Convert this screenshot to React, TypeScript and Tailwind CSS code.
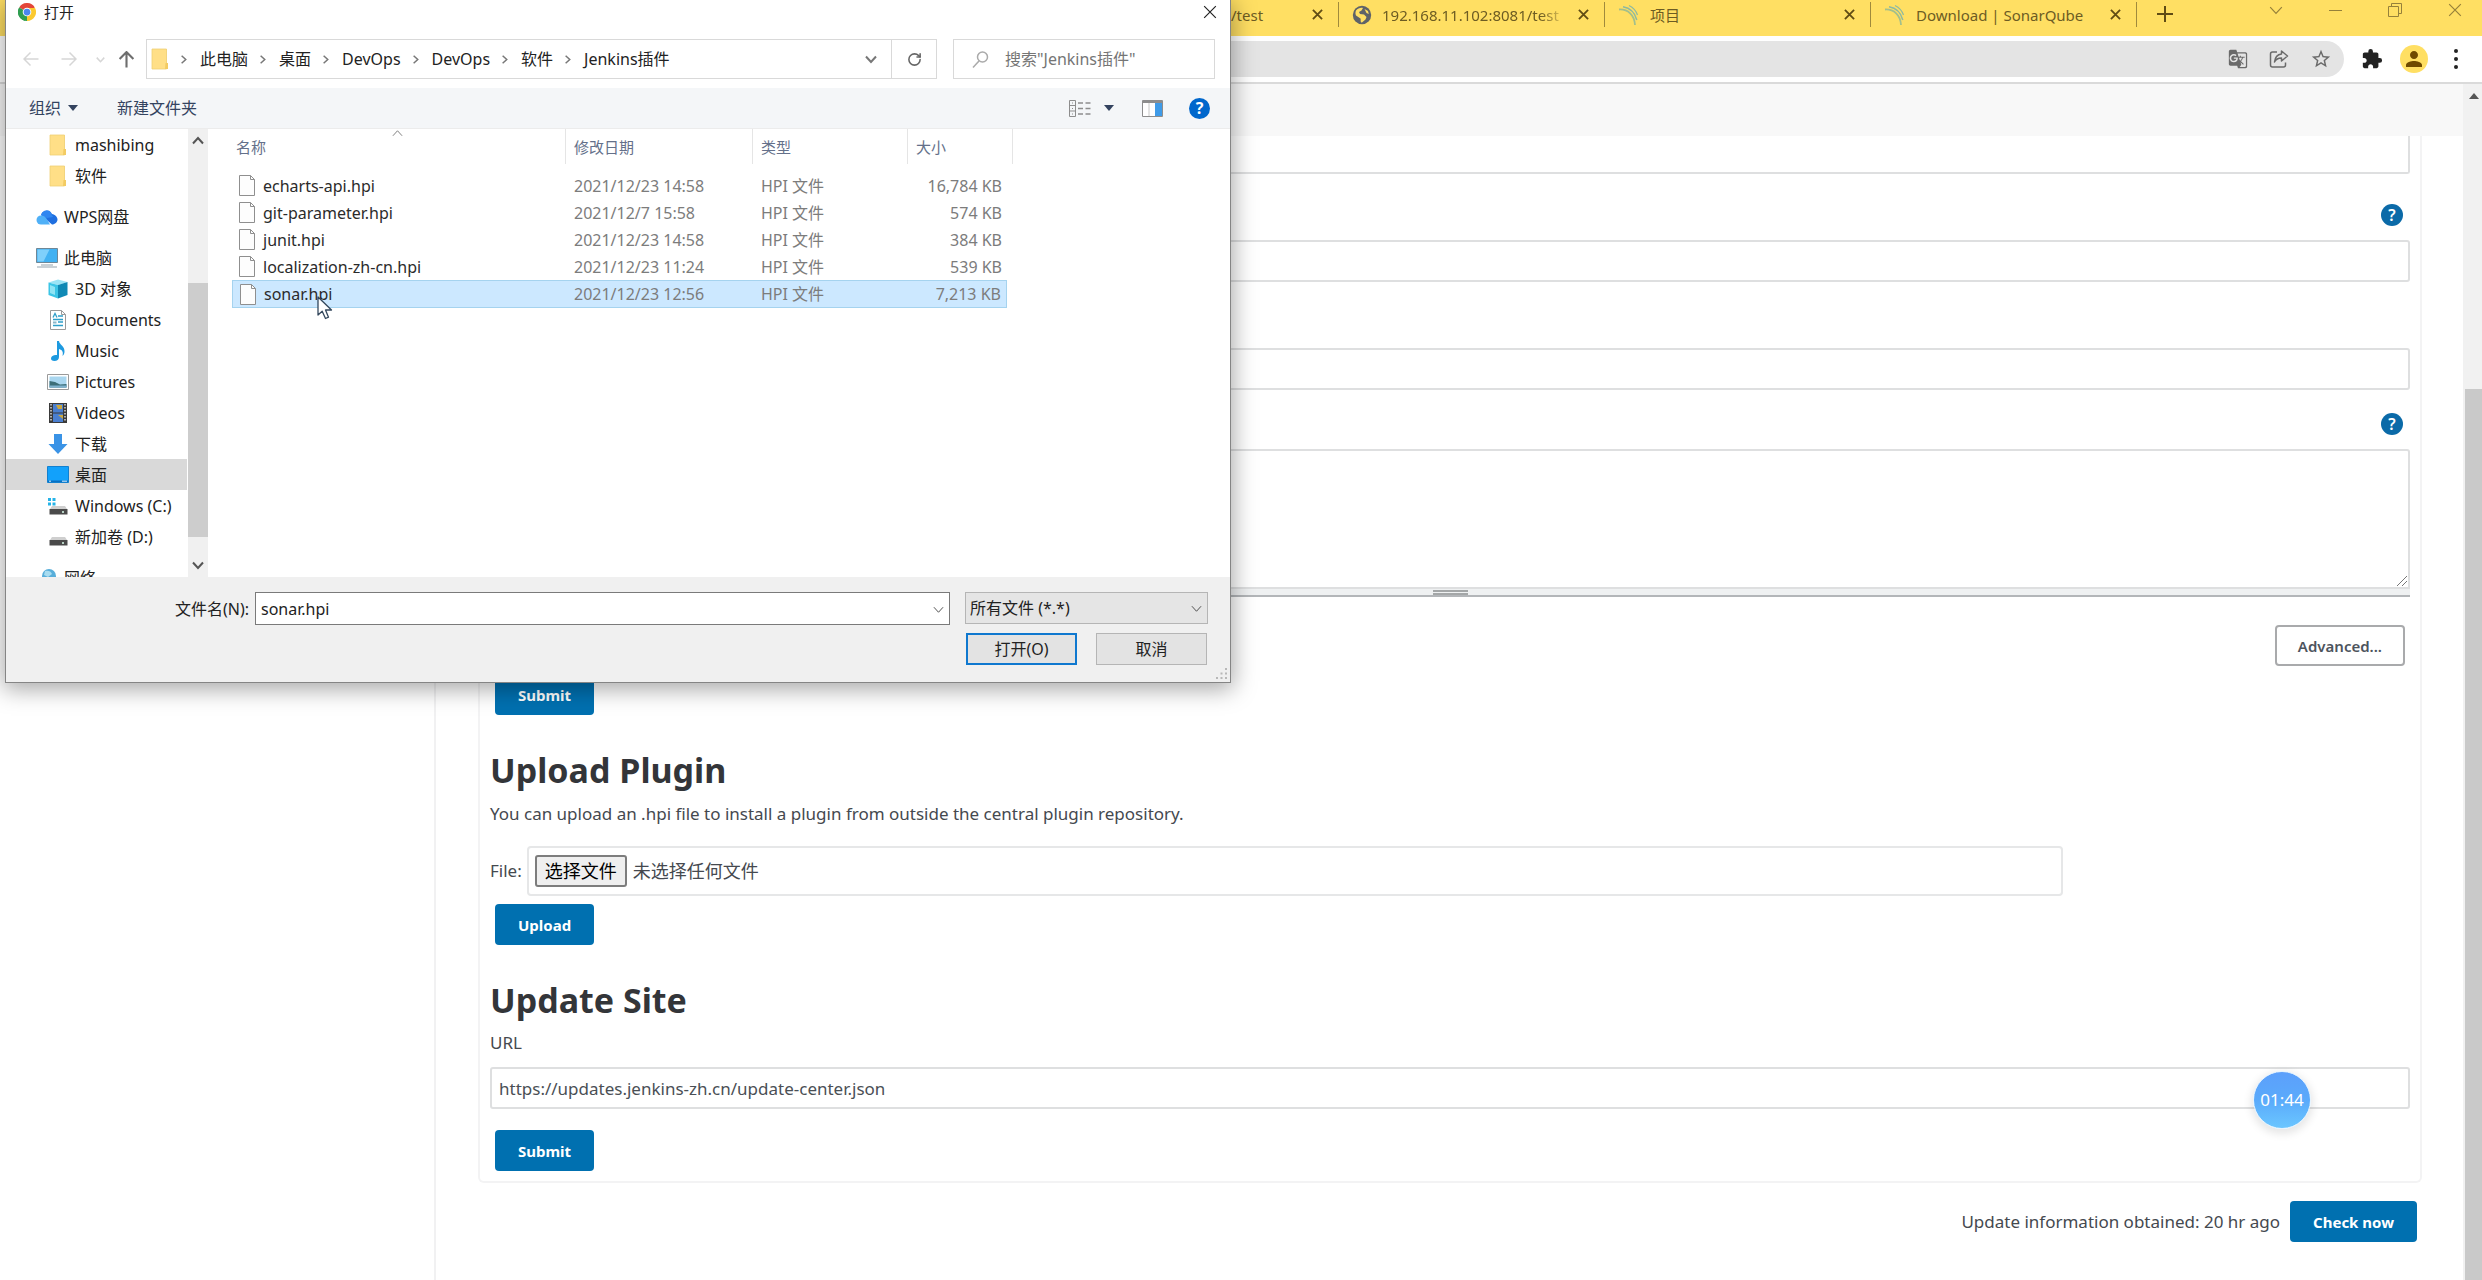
import type { ReactNode } from "react";
import { RotateCw } from "lucide-react";
import { MdExtension, MdGTranslate, MdPerson, MdStarBorder } from "react-icons/md";

/* ---------- small glyphs ---------- */

type GlyphProps = { className?: string };

const Chevron = ({ className = "" }: GlyphProps) => (
  <svg viewBox="0 0 12 12" fill="none" stroke="currentColor" className={className} aria-hidden="true">
    <path d="M1 3.5 6 9l5-5.5" />
  </svg>
);

const Cross = ({ className = "" }: GlyphProps) => (
  <svg viewBox="0 0 12 12" fill="none" stroke="currentColor" className={className} aria-hidden="true">
    <path d="M1 1l10 10M11 1 1 11" />
  </svg>
);

const Triangle = ({ className = "" }: GlyphProps) => (
  <svg viewBox="0 0 10 6" fill="currentColor" className={className} aria-hidden="true">
    <path d="M0 0h10L5 6z" />
  </svg>
);

const Arrow = ({ className = "" }: GlyphProps) => (
  <svg viewBox="0 0 16 16" fill="none" stroke="currentColor" className={className} aria-hidden="true">
    <path d="M15.5 8H1M7.5 1.5 1 8l6.500 6.500" />
  </svg>
);

const ChromeLogo = () => (
  <svg viewBox="0 0 48 48" className="size-[18px] shrink-0" aria-hidden="true">
    <path d="M24 24 3.200 12A24 24 0 0 1 44.800 12z" fill="#e3463a" />
    <path d="M24 24 44.800 12A24 24 0 0 1 24 48z" fill="#fbc92f" />
    <path d="M24 24v24A24 24 0 0 1 3.200 12z" fill="#2f9e50" />
    <path d="M24 13h20.300L44.800 12H24zM24 12h20.800a24 24 0 0 1 .5 1.500L33.500 29.500z" fill="#fbc92f" />
    <path d="M3.200 12 14.500 29.500 24 35l-6 12.200A24 24 0 0 1 3.200 12z" fill="#2f9e50" />
    <circle cx="24" cy="24" r="11.500" fill="#fff" />
    <circle cx="24" cy="24" r="9" fill="#4b86ee" />
  </svg>
);

const SonarIcon = () => (
  <svg viewBox="0 0 22 22" fill="none" className="size-[22px] shrink-0" aria-hidden="true">
    <path d="M1 5.500C10 5 16.500 11 17 21" stroke="#a3bf8c" strokeWidth="1.800" />
    <path d="M5 2.800C12 4 17 9 18.800 16" stroke="#8fb9a0" strokeWidth="1.500" />
    <path d="M11 1.500c4 2 7 5 8.500 9.500" stroke="#8fb9a0" strokeWidth="1.200" />
  </svg>
);

const GlobeIcon = () => (
  <svg viewBox="0 0 20 20" className="size-[20px] shrink-0" aria-hidden="true">
    <circle cx="10" cy="10" r="9.200" fill="#5f6368" />
    <path
      d="M4 5.500C6 3 9 2.300 11 3l-1.500 2.500L7 7l1 2 4 .5 2.500 2.500-1 2.500L10 17.500C8 17.500 9 15 8.500 13.500L4 10.500C3.300 9 3.300 7 4 5.500zM12.500 4l3.500 2 .8 3-2.300-1z"
      fill="#ffdf63"
    />
  </svg>
);

const ShareIcon = () => (
  <svg viewBox="0 0 20 20" fill="none" stroke="#6a6a6a" strokeWidth="1.500" strokeLinejoin="round" className="size-[20px]" aria-hidden="true">
    <path d="M8 3H3.500C2.500 3 1.500 4 1.500 5v11c0 1 1 2 2 2h11c1 0 2-1 2-2v-2.500" />
    <path d="M12.500 2 18.500 7l-6 5V9C9 9 7 10 5.500 13 6 8.500 8 5.500 12.500 5z" />
  </svg>
);

/* ---------- explorer tree and file icons ---------- */

const FolderIcon = () => (
  <svg viewBox="0 0 18 22" className="h-[22px] w-[18px] shrink-0" aria-hidden="true">
    <path d="M1 1h14.500v14l1.500 1v5H1z" fill="#ffe08a" />
    <path d="M1 1h14.500v20H1z" fill="#ffdf87" stroke="#efcf74" strokeWidth=".8" />
    <path d="M14.500 15h2.500v6h-3z" fill="#f3cb62" />
  </svg>
);

const CloudIcon = () => (
  <svg viewBox="0 0 22 16" className="h-4 w-[22px]" aria-hidden="true">
    <path d="M5 6a6 6 0 0 1 11-1c3 .5 5.500 3 5.500 5.500S19 15.500 16 15.500L6 7z" fill="#1f6fe0" />
    <path d="M5 6a6 6 0 0 1 9-3.800L17 8l-6 1z" fill="#2f86f0" />
    <path d="M5 15.500a4.500 4.500 0 0 1 0-9c3 0 4.500 1.500 6 4l3 5z" fill="#4fb0f7" />
  </svg>
);

const ComputerIcon = () => (
  <svg viewBox="0 0 22 20" className="h-5 w-[22px]" aria-hidden="true">
    <path d="M.5.500h21v14H.5z" fill="#41b1f2" stroke="#6e8797" />
    <path d="M1.500 1.500h12l-6 12h-6z" fill="#7fd0fb" />
    <path d="M5 17h12M1 19h20" stroke="#93a3ad" />
  </svg>
);

const CubeIcon = () => (
  <svg viewBox="0 0 20 20" className="size-5" aria-hidden="true">
    <path d="M10 .5 19.500 3 10 6 .5 3.500z" fill="#9be4f5" />
    <path d="M.5 3.500 10 6v13.500L.5 16z" fill="#3cc5e6" />
    <path d="M19.500 3v13L10 19.500V6z" fill="#1089b5" />
    <path d="M2 6v8l5 2V8z" fill="#8fe4f4" />
  </svg>
);

const DocumentIcon = () => (
  <svg viewBox="0 0 16 20" className="h-5 w-4" aria-hidden="true">
    <path d="M.5.500h11l4 4v15H.5z" fill="#fff" stroke="#9a9a9a" />
    <path d="M11.500.5v4h4" fill="none" stroke="#9a9a9a" />
    <path d="M3 7.500 5 3.500l2 4M8 6h5M3 9.500h10M8 12h5M3 15.500h10" stroke="#2f9fc9" strokeWidth="1.300" fill="none" />
    <path d="M3 11.500h3.500v2H3z" fill="#8bb7c9" />
  </svg>
);

const MusicIcon = () => (
  <svg viewBox="0 0 16 22" className="h-[22px] w-4" aria-hidden="true">
    <path d="M7 1h2c.5 4 6 5 5.500 11-.2 2-1 3-2 4 1-4 0-6-3.500-7v8c0 2.500-2 4-4.500 4S1 20 1 18.500C1 16 4 14.500 7 15z" fill="#1d9ae0" />
  </svg>
);

const PictureIcon = () => (
  <svg viewBox="0 0 22 16" className="h-4 w-[22px]" aria-hidden="true">
    <path d="M.5.500h21v15H.5z" fill="#fff" stroke="#9a9a9a" />
    <path d="M2.500 2.500h17v11h-17z" fill="#a9d6ef" />
    <path d="M2.500 7 8 8l5 2.500 6.500-.5v3.500h-17z" fill="#3c6e78" />
    <path d="M2.500 11.500h17v2h-17z" fill="#7fb3cf" />
  </svg>
);

const VideoIcon = () => (
  <svg viewBox="0 0 18 20" className="h-5 w-[18px]" aria-hidden="true">
    <path d="M0 0h18v20H0z" fill="#3a3a3a" />
    <path d="M4 1h10v8.500H4zM4 10.500h10V19H4z" fill="#4a7fd0" />
    <path d="M7 2h6v4H9zM9 12h5v4z" fill="#c9a740" />
    <path d="M2 1v18M16 1v18" stroke="#d8d8d8" strokeWidth="1.500" strokeDasharray="1.500 1.500" />
  </svg>
);

const DownloadIcon = () => (
  <svg viewBox="0 0 20 20" className="size-5" aria-hidden="true">
    <path d="M6 0h8v10h5.500L10 20 .5 10H6z" fill="#3a93e6" />
  </svg>
);

const DesktopIcon = () => (
  <svg viewBox="0 0 22 17" className="h-[17px] w-[22px]" aria-hidden="true">
    <path d="M.5.500h21v16H.5z" fill="#12a1fb" stroke="#1280cf" />
    <path d="M1 14.500h20V16H1z" fill="#0a6fc0" />
    <path d="M2 15.200h2M15 15.200h5" stroke="#d7efff" />
  </svg>
);

const DriveIcon = ({ system = false }: { system?: boolean }) => (
  <svg viewBox="0 0 22 18" className="h-[18px] w-[22px]" aria-hidden="true">
    {system && <path d="M1 1h3v3H1zM5.500 1h3v3h-3zM1 5.500h3v3H1zM5.500 5.500h3v3h-3z" fill="#25b3e8" />}
    <path d="M5 9h13l2 3H3z" fill="#cfcfcf" />
    <path d="M2.500 12h18v5.500h-18z" fill="#4a4a4a" />
    <path d="M15 15h2" stroke="#dfe" strokeWidth="1.500" />
  </svg>
);

const NetworkIcon = () => (
  <svg viewBox="0 0 20 20" className="size-5" aria-hidden="true">
    <circle cx="12" cy="8" r="7" fill="#58aeda" />
    <path d="M8 3c3-1 6 0 7 3l-4 3-4-2z" fill="#a8dcf0" />
    <path d="M1 9h9v8H1z" fill="#5d97bd" />
  </svg>
);

const FileIcon = () => (
  <svg viewBox="0 0 16 21" className="h-[21px] w-4 shrink-0" aria-hidden="true">
    <path d="M.5.500h11l4 4v16H.5z" fill="#fdfdfd" stroke="#8f8f8f" />
    <path d="M11.500.5v4h4" fill="none" stroke="#8f8f8f" />
  </svg>
);

const MousePointer = () => (
  <svg viewBox="0 0 16 24" className="absolute top-3 left-[84px] z-10 h-6 w-4" aria-hidden="true">
    <path d="M1 1v18l4.200-3.800L8.500 22.500l3-1.300L8.500 14h6z" fill="#fff" stroke="#33475c" strokeWidth="1.300" strokeLinejoin="round" />
  </svg>
);

/* ---------- browser chrome ---------- */

function Tab({ icon, title, wide = true, fade = false }: { icon?: ReactNode; title: string; wide?: boolean; fade?: boolean }) {
  return (
    <div
      className={
        "flex h-[25px] shrink-0 items-center border-r border-[#a08a3c] pr-[15px] " +
        (wide ? "w-[266px] gap-[10px] pl-[13px]" : "w-[110px] pl-[2px]")
      }
    >
      {icon}
      <span
        className={
          "min-w-0 flex-1 overflow-hidden text-[15px] leading-5 whitespace-nowrap text-[#6d5c23] " +
          (fade ? "[mask-image:linear-gradient(to_right,#000_85%,transparent)]" : "")
        }
      >
        {title}
      </span>
      <button type="button" aria-label="Close tab" className="shrink-0 text-[#604c14]">
        <Cross className="size-[11px] stroke-2" />
      </button>
    </div>
  );
}

function BrowserChrome() {
  return (
    <header className="shrink-0">
      <div className="flex h-9 bg-[#ffdf63] pt-[2px]">
        <div className="w-[1229px] shrink-0" />
        <Tab title="/test" wide={false} />
        <Tab icon={<GlobeIcon />} title="192.168.11.102:8081/test" fade />
        <Tab icon={<SonarIcon />} title="项目" />
        <Tab icon={<SonarIcon />} title="Download | SonarQube" />
        <button type="button" aria-label="New tab" className="ml-5 flex h-6 items-center text-[#604c14]">
          <svg viewBox="0 0 16 16" stroke="currentColor" strokeWidth="2" className="size-4" aria-hidden="true">
            <path d="M8 0v16M0 8h16" />
          </svg>
        </button>
        <div className="ml-auto flex h-4 items-center gap-[46px] pr-5 text-[#96813a]">
          <button type="button" aria-label="Search tabs"><Chevron className="size-[14px]" /></button>
          <button type="button" aria-label="Minimize"><div className="h-px w-[13px] bg-[#96813a]" /></button>
          <button type="button" aria-label="Restore">
            <svg viewBox="0 0 14 14" fill="none" stroke="currentColor" className="size-[14px]" aria-hidden="true">
              <path d="M.5 3.500h10v10H.5zM3.500 3.500v-3h10v10h-3" />
            </svg>
          </button>
          <button type="button" aria-label="Close window"><Cross className="size-[14px]" /></button>
        </div>
      </div>

      <div className="flex h-[48px] items-center border-b-2 border-[#dadada] bg-white pr-6 pl-[200px]">
        <div className="flex h-9 flex-1 items-center justify-end gap-[21px] rounded-full bg-[#e4e4e4] pr-3 text-[#6a6a6a]">
          <button type="button" aria-label="Translate"><MdGTranslate className="size-5" /></button>
          <button type="button" aria-label="Share"><ShareIcon /></button>
          <button type="button" aria-label="Bookmark"><MdStarBorder className="size-[22px]" /></button>
        </div>
        <button type="button" aria-label="Extensions" className="ml-[17px] text-[#222]"><MdExtension className="size-[22px]" /></button>
        <button type="button" aria-label="Profile" className="ml-[17px] flex size-7 items-center justify-center rounded-full bg-[#ffdf63] text-[#6f4a00]">
          <MdPerson className="size-6" />
        </button>
        <button type="button" aria-label="Menu" className="ml-[26px] flex flex-col gap-1">
          <span className="size-1 rounded-full bg-[#222]" />
          <span className="size-1 rounded-full bg-[#222]" />
          <span className="size-1 rounded-full bg-[#222]" />
        </button>
      </div>
    </header>
  );
}

/* ---------- plugin manager page ---------- */

const fieldBox = "block h-[42px] w-full rounded-[3px] border-2 border-[#dedfe0] bg-white px-[7px] text-[17px] leading-6 text-[#4a4f55] outline-none";

function PrimaryButton({ children, className = "" }: { children: ReactNode; className?: string }) {
  return (
    <button type="button" className={"h-[41px] rounded-[4px] bg-[#0070b0] px-[23px] text-[15px] leading-5 font-bold text-white " + className}>
      {children}
    </button>
  );
}

function HelpRow({ className }: { className: string }) {
  return (
    <div className={"flex items-end justify-end pr-[7px] " + className}>
      <button type="button" aria-label="Help" className="flex size-[22px] items-center justify-center rounded-full bg-[#0b6aa8] text-base leading-5 font-semibold text-white">
        ?
      </button>
    </div>
  );
}

function PluginPage() {
  return (
    <div className="flex min-h-0 flex-1">
      <div className="flex min-w-0 flex-1 flex-col">
        <div className="h-[52px] shrink-0 bg-[#f8f8f8]" />
        <div className="flex min-h-0 flex-1">
          <aside className="w-[436px] shrink-0 border-r-2 border-[#f1f1f2]" />
          <main className="flex-1 pr-[41px] pl-[42px] text-[17px] leading-6 text-[#45494f]">
            <section className="rounded-b-md border-x-2 border-b-2 border-[#f3f3f4] px-[10px] pb-[10px]">
              <input aria-label="Server" className="block h-[38px] w-full rounded-b-[3px] border-2 border-t-0 border-[#dedfe0] outline-none" />
              <HelpRow className="h-[66px] pb-[14px]" />
              <input aria-label="User name" className={fieldBox} />
              <input aria-label="Password" type="password" className={fieldBox + " mt-[66px]"} />
              <HelpRow className="h-[59px] pb-[14px]" />
              <div className="relative">
                <textarea aria-label="No Proxy Host" className="block h-[140px] w-full resize-none rounded-t-[3px] border-2 border-[#dedfe0] outline-none" />
                <svg viewBox="0 0 12 12" stroke="#777" className="absolute right-[2px] bottom-[2px] size-3" aria-hidden="true">
                  <path d="M1 11 11 1M6 11l5-5" />
                </svg>
              </div>
              <div className="flex h-2 items-center justify-center border-b-2 border-[#b3b6b9] bg-[#eff1f2]">
                <div className="h-[5px] w-[35px] border-y-2 border-[#a4a7a8]" />
              </div>
              <div className="mt-7 flex justify-end pr-[5px]">
                <button type="button" className="h-[41px] rounded-[4px] border-2 border-[#a9aaac] px-[21px] text-[15px] leading-5 font-semibold text-[#4d545d]">
                  Advanced...
                </button>
              </div>
              <PrimaryButton className="mt-2 ml-[5px]">Submit</PrimaryButton>

              <h1 className="mt-[34px] text-[34px] leading-[42px] font-bold text-[#333539]">Upload Plugin</h1>
              <p className="mt-[11px]">You can upload an .hpi file to install a plugin from outside the central plugin repository.</p>
              <div className="mt-5 flex items-center gap-[5px] pr-[347px]">
                <span>File:</span>
                <div className="flex h-[50px] flex-1 items-center gap-[6px] rounded-[4px] border-2 border-[#e6e7e8] px-[6px] text-lg leading-6">
                  <label className="flex h-8 items-center rounded-[3px] border-2 border-[#7d7d7d] bg-[#efefef] px-[8px] text-black">
                    选择文件
                    <input type="file" className="sr-only" />
                  </label>
                  <span>未选择任何文件</span>
                </div>
              </div>
              <PrimaryButton className="mt-2 ml-[5px]">Upload</PrimaryButton>

              <h1 className="mt-[34px] text-[34px] leading-[42px] font-bold text-[#333539]">Update Site</h1>
              <label htmlFor="site-url" className="mt-[10px] block">URL</label>
              <div className="relative mt-3">
                <input id="site-url" defaultValue="https://updates.jenkins-zh.cn/update-center.json" className={fieldBox} />
                <div className="absolute top-1 right-[99px] flex size-[58px] items-center justify-center rounded-full border border-[#e4f3ff] bg-linear-to-b from-[#5c9ffb] via-[#5aaafb] to-[#6bc6ff] text-[17px] leading-6 text-white shadow-[0_3px_8px_2px_rgba(0,0,0,0.1)]">
                  01:44
                </div>
              </div>
              <PrimaryButton className="mt-[21px] ml-[5px]">Submit</PrimaryButton>
            </section>
            <div className="mt-[18px] flex items-center justify-end gap-[10px] pr-[5px]">
              <span>Update information obtained: 20 hr ago</span>
              <PrimaryButton>Check now</PrimaryButton>
            </div>
          </main>
        </div>
      </div>
      <div className="flex w-[19px] shrink-0 flex-col items-end bg-[#f1f1f1] pt-[9px]">
        <Triangle className="mr-[3px] h-[6px] w-[10px] rotate-180 text-[#555]" />
        <div className="mt-[290px] w-[17px] flex-1 bg-[#c9c9c9]" />
      </div>
    </div>
  );
}

/* ---------- file picker window ---------- */

const crumbs = ["此电脑", "桌面", "DevOps", "DevOps", "软件", "Jenkins插件"];

type Node = { label: string; icon: ReactNode; root?: boolean; selected?: boolean };

const treeGroups: Node[][] = [
  [
    { label: "mashibing", icon: <FolderIcon /> },
    { label: "软件", icon: <FolderIcon /> },
  ],
  [{ label: "WPS网盘", icon: <CloudIcon />, root: true }],
  [
    { label: "此电脑", icon: <ComputerIcon />, root: true },
    { label: "3D 对象", icon: <CubeIcon /> },
    { label: "Documents", icon: <DocumentIcon /> },
    { label: "Music", icon: <MusicIcon /> },
    { label: "Pictures", icon: <PictureIcon /> },
    { label: "Videos", icon: <VideoIcon /> },
    { label: "下载", icon: <DownloadIcon /> },
    { label: "桌面", icon: <DesktopIcon />, selected: true },
    { label: "Windows (C:)", icon: <DriveIcon system /> },
    { label: "新加卷 (D:)", icon: <DriveIcon /> },
  ],
  [{ label: "网络", icon: <NetworkIcon />, root: true }],
];

const files = [
  { name: "echarts-api.hpi", date: "2021/12/23 14:58", size: "16,784 KB" },
  { name: "git-parameter.hpi", date: "2021/12/7 15:58", size: "574 KB" },
  { name: "junit.hpi", date: "2021/12/23 14:58", size: "384 KB" },
  { name: "localization-zh-cn.hpi", date: "2021/12/23 11:24", size: "539 KB" },
  { name: "sonar.hpi", date: "2021/12/23 12:56", size: "7,213 KB", selected: true },
];

const columns = [
  { label: "名称", pad: "pl-1" },
  { label: "修改日期", pad: "pl-2" },
  { label: "类型", pad: "pl-2" },
  { label: "大小", pad: "pl-2" },
];

function FileTable() {
  return (
    <table className="ml-6 w-[781px] table-fixed border-separate border-spacing-0 leading-5 text-[#7c7c7c]">
      <colgroup>
        <col className="w-[334px]" />
        <col className="w-[187px]" />
        <col className="w-[155px]" />
        <col className="w-[99px]" />
        <col className="w-[6px]" />
      </colgroup>
      <thead>
        <tr>
          {columns.map((c, i) => (
            <th key={c.label} colSpan={i === 3 ? 2 : 1} className="h-[43px] p-0 text-left align-top text-[15px] font-normal text-[#64708a]">
              <div className={"relative flex h-[35px] items-center border-r border-[#e5e5e5] " + c.pad}>
                {c.label}
                {i === 0 && <Chevron className="absolute top-[-1px] left-[160px] size-[11px] rotate-180 text-[#777]" />}
              </div>
            </th>
          ))}
        </tr>
      </thead>
      <tbody>
        {files.map((f) => {
          const mid = f.selected ? "border-y border-[#a5d3ef] bg-[#cce8ff]" : "";
          return (
            <tr key={f.name} className={f.selected ? "h-7" : "h-[27px]"}>
              <td className={"p-0 " + mid + (f.selected ? " border-l" : "")}>
                <div className="relative flex items-center gap-2 pl-[7px] whitespace-nowrap text-[#2b2b2b]">
                  <FileIcon />
                  <span>{f.name}</span>
                  {f.selected && <MousePointer />}
                </div>
              </td>
              <td className={"p-0 pl-2 whitespace-nowrap " + mid}>{f.date}</td>
              <td className={"p-0 pl-2 whitespace-nowrap " + mid}>HPI 文件</td>
              <td className={"p-0 pr-[5px] text-right whitespace-nowrap " + mid + (f.selected ? " border-r" : "")}>{f.size}</td>
              <td className="p-0" />
            </tr>
          );
        })}
      </tbody>
    </table>
  );
}

function OpenDialog() {
  return (
    <div
      role="dialog"
      aria-label="打开"
      className="absolute top-0 left-[5px] w-[1226px] border border-t-0 border-[#858585] bg-white text-base leading-5 text-[#222] shadow-[0_4px_22px_2px_rgba(0,0,0,0.35)]"
    >
      <div className="flex h-6 items-center pr-[13px] pl-3">
        <ChromeLogo />
        <span className="ml-2 text-[15px]">打开</span>
        <button type="button" aria-label="Close" className="ml-auto"><Cross className="size-[14px]" /></button>
      </div>

      <div className="mt-[15px] flex h-10 items-center pr-[15px] pl-[17px]">
        <button type="button" aria-label="Back"><Arrow className="size-4 stroke-[1.5] text-[#d6d6d6]" /></button>
        <button type="button" aria-label="Forward" className="ml-[22px]"><Arrow className="size-4 rotate-180 stroke-[1.5] text-[#d6d6d6]" /></button>
        <button type="button" aria-label="Recent" className="ml-[19px]"><Chevron className="size-[9px] stroke-2 text-[#d6d6d6]" /></button>
        <button type="button" aria-label="Up" className="ml-[13px]"><Arrow className="size-[17px] rotate-90 stroke-2 text-[#6e6e6e]" /></button>
        <div className="ml-[11px] flex h-full flex-1 items-center border border-[#d9d9d9] pl-1">
          <FolderIcon />
          {crumbs.map((c, i) => (
            <span key={i} className="flex items-center">
              <Chevron className="mr-3 ml-[10px] size-[9px] -rotate-90 stroke-2 text-[#777]" />
              {c}
            </span>
          ))}
          <button type="button" aria-label="Previous locations" className="ml-auto pr-[14px]"><Chevron className="size-3 stroke-2 text-[#777]" /></button>
        </div>
        <button type="button" aria-label="Refresh" className="flex h-full w-[45px] items-center justify-center border border-l-0 border-[#d9d9d9] text-[#666]">
          <RotateCw className="size-[15px] stroke-[2.5]" />
        </button>
        <label className="ml-4 flex h-full w-[262px] items-center border border-[#d9d9d9] pl-[18px]">
          <svg viewBox="0 0 17 17" fill="none" stroke="#aaa" strokeWidth="1.500" className="size-[17px] shrink-0" aria-hidden="true">
            <circle cx="10.500" cy="6" r="5" />
            <path d="M7 10 1 16.500" />
          </svg>
          <input aria-label="搜索" placeholder={'搜索"Jenkins插件"'} className="ml-4 min-w-0 flex-1 outline-none placeholder:text-[#757575]" />
        </label>
      </div>

      <div className="mt-[9px] flex h-[41px] items-center border-b border-[#ececec] bg-[#f4f6f8] pr-5 pl-[23px] text-[#33435f]">
        <button type="button" className="flex items-center gap-[7px]">
          组织
          <Triangle className="h-[6px] w-[10px]" />
        </button>
        <button type="button" className="ml-[39px]">新建文件夹</button>
        <button type="button" aria-label="View" className="ml-auto flex items-center gap-[13px]">
          <svg viewBox="0 0 22 17" fill="none" stroke="#8d8d8d" className="h-[17px] w-[22px]" aria-hidden="true">
            <path d="M.5.500h6v16h-6zM.5 5.500h6M.5 11h6M3.500 2.500v1M3.500 8v1M3.500 13.500v1" />
            <path d="M9 3h5M9 8.500h5M9 14h5M16.500 3h5M16.500 8.500h5M16.500 14h5" strokeWidth="1.500" />
          </svg>
          <Triangle className="h-[6px] w-[10px]" />
        </button>
        <button type="button" aria-label="Preview pane" className="ml-7">
          <svg viewBox="0 0 21 17" className="h-[17px] w-[21px]" aria-hidden="true">
            <path d="M.5.500h20v16H.5z" fill="#fff" stroke="#8d8d8d" />
            <path d="M1 2h19" stroke="#8d8d8d" strokeWidth="2" />
            <path d="M7 3v13" stroke="#c8c8c8" />
            <path d="M13 3h7v13h-7z" fill="#3f9be8" />
          </svg>
        </button>
        <button type="button" aria-label="Help" className="ml-[26px] flex size-[21px] items-center justify-center rounded-full bg-[#0067cc] font-bold text-white">?</button>
      </div>

      <div className="flex h-[448px]">
        <nav className="flex w-[182px] flex-col gap-[10px] overflow-hidden pr-[1px]">
          {treeGroups.map((group, g) => (
            <ul key={g} className="shrink-0">
              {group.map((n) => (
                <li
                  key={n.label}
                  className={"flex h-[31px] items-center gap-[6px] " + (n.root ? "pl-[30px] " : "pl-[41px] ") + (n.selected ? "bg-[#d9d9d9]" : "")}
                >
                  <span className="flex w-[22px] shrink-0 justify-center">{n.icon}</span>
                  <a href="#" className="whitespace-nowrap text-[#222]">{n.label}</a>
                </li>
              ))}
            </ul>
          ))}
        </nav>
        <div className="flex w-5 flex-col items-center bg-[#f0f0f0] py-[6px]">
          <Chevron className="size-3 rotate-180 stroke-2 text-[#555]" />
          <div className="mt-[136px] h-[254px] w-full bg-[#cdcdcd]" />
          <Chevron className="mt-auto size-3 stroke-2 text-[#555]" />
        </div>
        <div className="flex-1">
          <FileTable />
        </div>
      </div>

      <div className="flex h-[105px] bg-[#f0f0f0] pt-[15px] pr-[22px]">
        <label htmlFor="file-name" className="flex h-[33px] w-[243px] items-center justify-end">文件名(N):</label>
        <div className="relative ml-[6px] h-[33px] flex-1">
          <input id="file-name" defaultValue="sonar.hpi" className="h-full w-full border border-[#7a7a7a] bg-white px-[5px] leading-6 outline-none" />
          <Chevron className="absolute top-3 right-[6px] size-[11px] text-[#444]" />
        </div>
        <div className="ml-[15px] w-[243px]">
          <div className="relative">
            <select aria-label="文件类型" className="block h-8 w-full appearance-none border border-[#b5b5b5] bg-[#e5e5e5] px-1 outline-none">
              <option>所有文件 (*.*)</option>
            </select>
            <Chevron className="absolute top-[11px] right-[6px] size-[11px] text-[#444]" />
          </div>
          <div className="mt-[9px] flex justify-between px-px">
            <button type="button" className="h-8 w-[111px] border-2 border-[#0f78cf] bg-[#e3e3e3]">打开(O)</button>
            <button type="button" className="h-8 w-[111px] border border-[#b5b5b5] bg-[#e3e3e3]">取消</button>
          </div>
        </div>
      </div>
      <svg viewBox="0 0 12 12" fill="#b8b8b8" className="absolute right-[2px] bottom-[2px] size-3" aria-hidden="true">
        <path d="M9 0h2v2H9zM9 4.500h2v2H9zM9 9h2v2H9zM4.500 4.500h2v2h-2zM4.500 9h2v2h-2zM0 9h2v2H0z" />
      </svg>
    </div>
  );
}

export default function App() {
  return (
    <div className="relative flex h-screen flex-col overflow-hidden bg-white font-['Noto_Sans','Noto_Sans_CJK_SC',sans-serif]">
      <BrowserChrome />
      <PluginPage />
      <OpenDialog />
    </div>
  );
}
